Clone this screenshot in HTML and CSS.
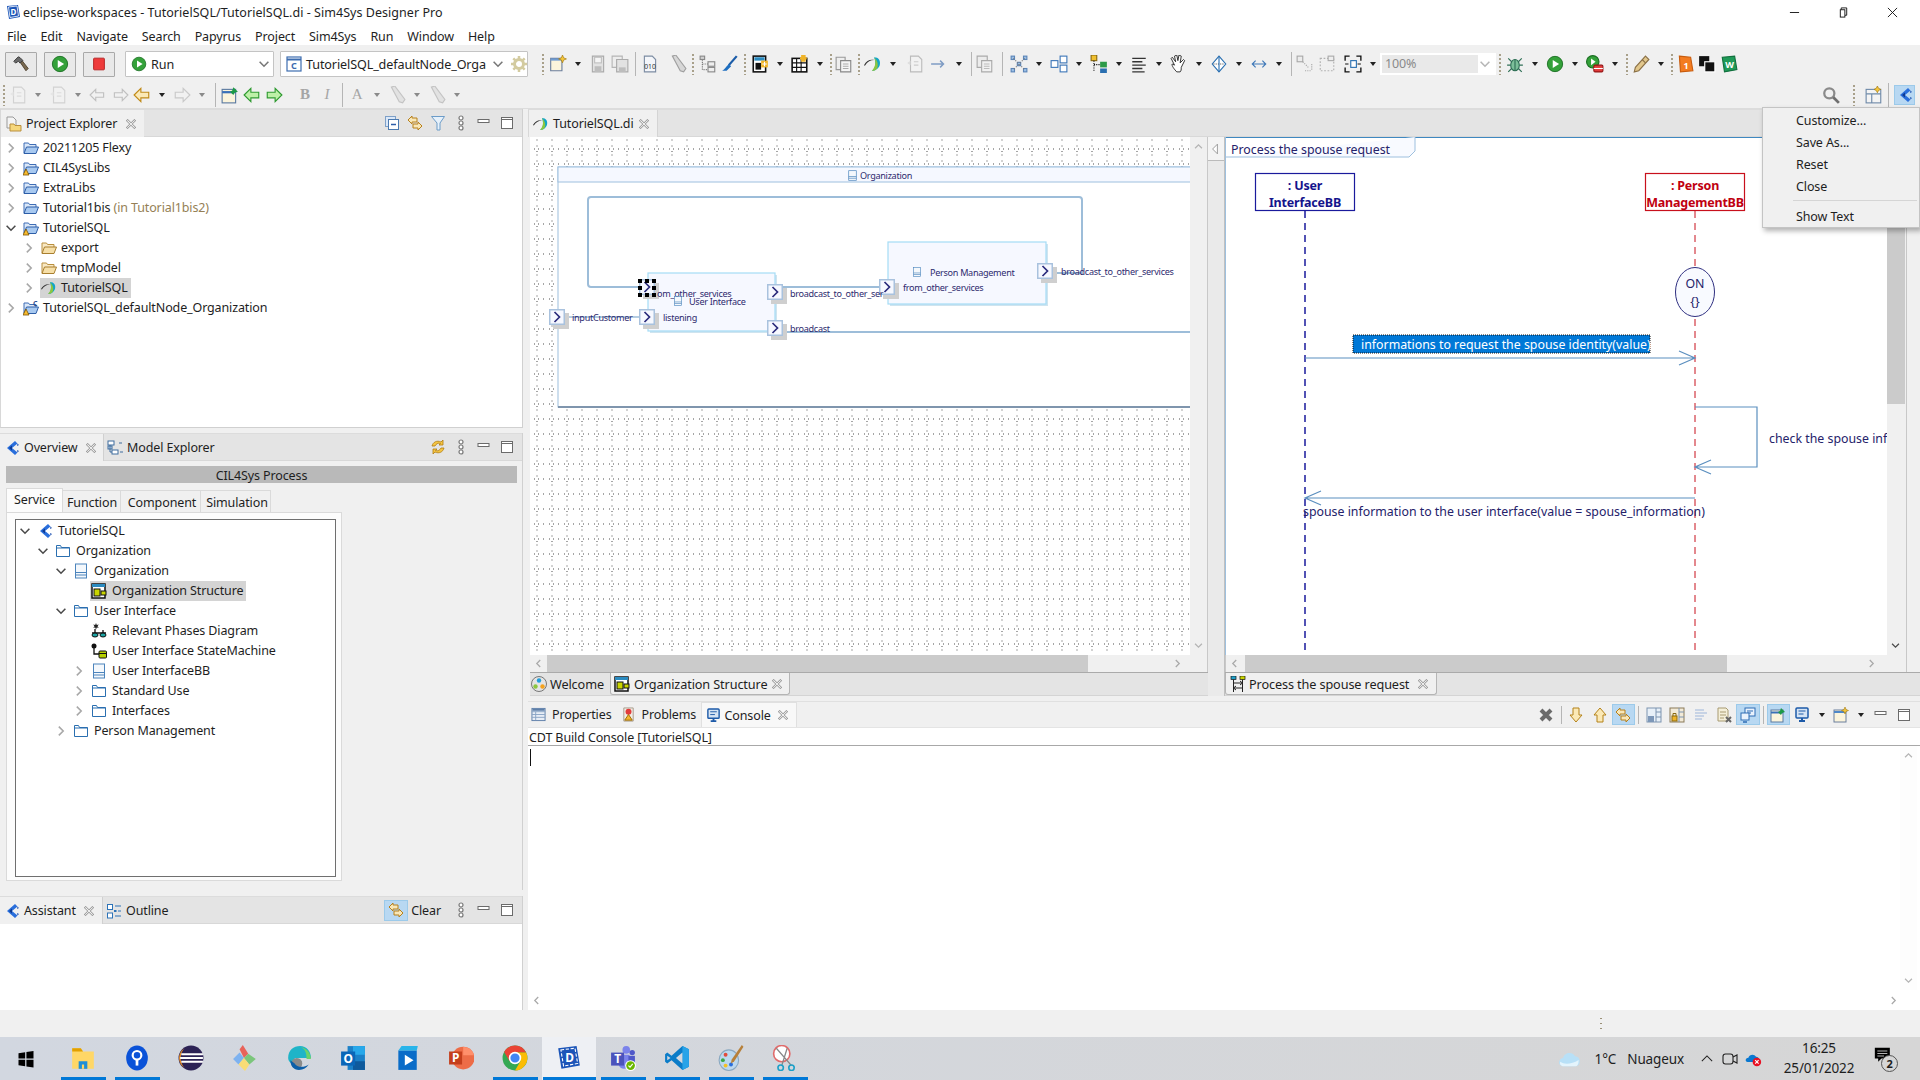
FILE: index.html
```html
<!DOCTYPE html>
<html lang="en">
<head>
<meta charset="utf-8">
<title>eclipse-workspaces - TutorielSQL/TutorielSQL.di - Sim4Sys Designer Pro</title>
<link rel="stylesheet" href="styles.css">
</head>
<body>
<svg class="sprite" xmlns="http://www.w3.org/2000/svg">
<defs>
<pattern id="grid" x="0" y="2" width="15" height="15" patternUnits="userSpaceOnUse">
<path d="M11 3h2M11 9h2M11 14.5h2M3.500 11v2M9.500 11v2M13.500 11v2" stroke="#a6a6a6" stroke-width="1" fill="none"/>
</pattern>
</defs>
<symbol id="chr" viewBox="0 0 16 16"><path d="M5.500 3l5 5-5 5" fill="none" stroke="#a8a8a8" stroke-width="1.800"/></symbol>
<symbol id="chd" viewBox="0 0 16 16"><path d="M3 5.500l5 5 5-5" fill="none" stroke="#4a4a4a" stroke-width="1.800"/></symbol>
<symbol id="chu" viewBox="0 0 16 16"><path d="M3 10.500l5-5 5 5" fill="none" stroke="#b4b4b4" stroke-width="1.800"/></symbol>
<symbol id="chg" viewBox="0 0 16 16"><path d="M3 5.500l5 5 5-5" fill="none" stroke="#b4b4b4" stroke-width="1.800"/></symbol>
<symbol id="x" viewBox="0 0 16 16"><path d="M3.500 3.500l9 9M12.500 3.500l-9 9" stroke="#8c8c8c" stroke-width="3.200" stroke-linecap="square"/><path d="M3.500 3.500l9 9M12.500 3.500l-9 9" stroke="#f4f4f4" stroke-width="1.400" stroke-linecap="square"/></symbol>
<symbol id="min" viewBox="0 0 16 16"><rect x="2" y="4.500" width="11" height="3" fill="#fff" stroke="#6b6b6b"/></symbol>
<symbol id="max" viewBox="0 0 16 16"><rect x="2.500" y="2.500" width="11" height="11" fill="#fff" stroke="#6b6b6b"/><path d="M2.500 4.500h11" stroke="#6b6b6b"/></symbol>
<symbol id="dots" viewBox="0 0 16 16"><g fill="#fff" stroke="#7a7a7a" stroke-width="1.200"><circle cx="8" cy="3" r="2"/><circle cx="8" cy="8" r="2"/><circle cx="8" cy="13" r="2"/></g></symbol>
<symbol id="fb" viewBox="0 0 16 16"><path d="M1 13V3h4.500l1 1.500H13V7" fill="#dbe8f8" stroke="#3f6db5"/><path d="M1 13.500l2.500-6.500h12L13 13.500z" fill="#a8c9f0" stroke="#2d5ea8"/></symbol>
<symbol id="fo" viewBox="0 0 16 16"><path d="M1 13V3h4.500l1 1.500H13V7" fill="#f8e8c4" stroke="#b98f3e"/><path d="M1 13.500l2.500-6.500h12L13 13.500z" fill="#f6dfa8" stroke="#a97f2f"/></symbol>
<symbol id="pe" viewBox="0 0 16 16"><path d="M1 1h6l3 3v8H1z" fill="#f4f4f4" stroke="#9a9a9a"/><path d="M4 8h4l1 1.500h6V15H4z" fill="#f6d77c" stroke="#b98f3e"/></symbol>
<symbol id="fbw" viewBox="0 0 16 16"><use href="#fb" width="16" height="16"/><path d="M3 9l3 6H0z" fill="#f8bb2e" stroke="#7a5200" stroke-width=".8"/></symbol>
<symbol id="pap" viewBox="0 0 16 16"><path d="M0 9C2 5 6 3.500 9 4.500 6 4.500 3 6 .8 9.500z" fill="#333"/><path d="M9 2c4 0 6 3 5 7-1 3-4 5-7 5 3-2 4-6 2-12z" fill="#12a5c8"/><path d="M9 2c2 4 1 9-2 12 3 0 4-1 5-3 1-4-1-7-3-9z" fill="#8cc63f"/></symbol>
<symbol id="cil" viewBox="0 0 16 16"><path d="M11 1L3 8l8 7 2.500-2.500L8 8l5.500-4.500z" fill="#2a6fdc"/><path d="M13.500 3.500L15 5l-2 1zM13.500 12.500L15 11l-2-1z" fill="#1d50b0"/><path d="M5 8l3-2.500v5z" fill="#0e3b94"/></symbol>
<symbol id="mex" viewBox="0 0 16 16"><g fill="#fff" stroke="#3f6d9e"><rect x="1" y="1" width="6" height="4"/><rect x="5" y="10" width="6" height="4"/><rect x="1" y="6" width="4" height="3" fill="#cfe0f0"/></g><path d="M3 5v7h2M12 3h3M13 12h3" fill="none" stroke="#3f6d9e"/></symbol>
<symbol id="sync" viewBox="0 0 16 16"><path d="M13 1v5H9l1.500-1.500C8 3.500 6 5 5 7H2c1-4 5-6 9-4z" fill="#f5c542" stroke="#b07c10" stroke-width=".8"/><path d="M3 15v-5h4l-1.500 1.500c2.500 1 4.500-.5 5.500-2.500h3c-1 4-5 6-9 4z" fill="#f5c542" stroke="#b07c10" stroke-width=".8"/></symbol>
<symbol id="out" viewBox="0 0 16 16"><g fill="#fff" stroke="#2d73b8"><rect x="1.500" y="1.500" width="5" height="5"/><rect x="1.500" y="10" width="5" height="5"/></g><path d="M9 3h6M9 8h2M12 8h3M9 13h6" stroke="#2d73b8"/><rect x="8" y="7" width="2" height="2" fill="#2d73b8"/></symbol>
<symbol id="link" viewBox="0 0 16 16"><path d="M1 5l4-4v2h5v4H5v2z" fill="#f8e7b8" stroke="#b8801a"/><path d="M15 11l-4 4v-2H6V9h5V7z" fill="#f8e7b8" stroke="#b8801a"/></symbol>
<symbol id="coll" viewBox="0 0 16 16"><rect x="1.500" y="1.500" width="10" height="10" fill="#dbe8f8" stroke="#7ea0c8"/><rect x="4.500" y="4.500" width="10" height="10" fill="#fff" stroke="#4c7ab0"/><path d="M7 9.500h5" stroke="#2d5ea8" stroke-width="1.500"/></symbol>
<symbol id="filt" viewBox="0 0 16 16"><path d="M1.500 1.500h13L10 8v7H7V8z" fill="#e6f1fb" stroke="#6c9cc8"/></symbol>
<symbol id="fold" viewBox="0 0 16 16"><path d="M1.500 13.500v-11h4l1 2h8v9z" fill="#fff" stroke="#2a6fb0"/><path d="M1.500 5h13" stroke="#2a6fb0"/></symbol>
<symbol id="block" viewBox="0 0 16 16"><rect x="2.500" y="1" width="11" height="14" fill="#f4f8fc" stroke="#4c84bc"/><path d="M2.500 9.500h11M2.500 12h11" stroke="#4c84bc"/></symbol>
<symbol id="ostr" viewBox="0 0 16 16"><rect x="1" y="1" width="13" height="14" fill="#fff" stroke="#111" stroke-width="1.500"/><rect x="1" y="1" width="13" height="3" fill="#2b8bc0"/><rect x="3" y="6" width="6" height="7" fill="#c9d400" stroke="#111"/><rect x="10" y="8" width="5" height="4" fill="#c9d400" stroke="#111"/></symbol>
<symbol id="phas" viewBox="0 0 16 16"><path d="M5 0l.8 2 2-.4-1.300 1.600 1.300 1.500-2-.3L5 6.500 4.200 4.400l-2 .3 1.300-1.500L2.200 1.600l2 .4z" fill="#222"/><path d="M4 6v5M1 10h14M12 7v4" stroke="#111" stroke-width="1.300"/><ellipse cx="4" cy="12" rx="3" ry="2" fill="#1ca4a4" stroke="#111"/><ellipse cx="12" cy="12" rx="3" ry="2" fill="#1ca4a4" stroke="#111"/></symbol>
<symbol id="stm" viewBox="0 0 16 16"><circle cx="3" cy="3" r="2.500" fill="#111"/><path d="M3 5v6h5" fill="none" stroke="#111" stroke-width="1.300"/><rect x="8" y="8" width="7.500" height="7" rx="1" fill="#b7d000" stroke="#111"/><path d="M8 10.500h7.500" stroke="#111"/></symbol>
<symbol id="tb-props" viewBox="0 0 16 16"><rect x="1" y="1.500" width="14" height="13" fill="#e8eef6" stroke="#5d7ea8"/><path d="M1 5h14M1 8h14M1 11h14M5 5v9" stroke="#8aa4c4"/><path d="M1.500 3h13" stroke="#5d7ea8" stroke-width="2"/></symbol>
<symbol id="tb-prob" viewBox="0 0 16 16"><path d="M3 1h10v14H3z" fill="#f2ece4" stroke="#a59a8a"/><circle cx="8" cy="5" r="3.200" fill="#e23b3b"/><path d="M8 8l4 6H4z" fill="#f6b52e" stroke="#9a6a00"/></symbol>
<symbol id="tb-cons" viewBox="0 0 16 16"><rect x="2" y="1" width="12" height="10" rx="1" fill="#d6e4f4" stroke="#1d5aa8" stroke-width="1.500"/><path d="M4.500 4h7M4.500 7h5" stroke="#1d5aa8"/><path d="M5 14h6M8 11v3" stroke="#1d5aa8" stroke-width="2"/></symbol>
<symbol id="wel" viewBox="0 0 16 16"><circle cx="8" cy="8" r="7.500" fill="#e4e4e4" stroke="#777"/><circle cx="8" cy="4.500" r="2.200" fill="#1f9fdc"/><circle cx="4.500" cy="10.500" r="2.200" fill="#8cc63f"/><circle cx="11.500" cy="10.500" r="2.200" fill="#f3a21f"/></symbol>
<symbol id="seq" viewBox="0 0 16 16"><rect x="1" y="0" width="5" height="3.500" fill="#1f9fc8" stroke="#111" stroke-width=".7"/><rect x="10" y="0" width="5" height="3.500" fill="#c9d400" stroke="#111" stroke-width=".7"/><path d="M3.500 3.500V16M12.500 3.500V16M3.500 7h9M12.500 12h-9M10 5l2.500 2-2.500 2M6 10l-2.500 2L6 14" fill="none" stroke="#222"/></symbol>
<symbol id="hammer" viewBox="0 0 20 20"><path d="M9 8l2-2 7 9-2.500 2.500z" fill="#7a6a50" stroke="#4a3d2a"/><path d="M2 7l5-5 2 1 3 3-3 3-2-2-3 2z" fill="#6a6a6a" stroke="#333"/></symbol>
<symbol id="playb" viewBox="0 0 20 20"><circle cx="10" cy="10" r="8.500" fill="#34a13a" stroke="#1b6e22"/><path d="M7.500 5.500l7 4.500-7 4.500z" fill="#fff"/></symbol>
<symbol id="stop" viewBox="0 0 20 20"><rect x="4" y="3.500" width="12" height="13" rx="1" fill="#ee3b3b" stroke="#b21d1d"/></symbol>
<symbol id="cdoc" viewBox="0 0 16 16"><rect x="1" y="1" width="14" height="14" fill="#fff" stroke="#3d6db0" stroke-width="1.200"/><path d="M1 3.500h14" stroke="#3d6db0" stroke-width="2"/></symbol>
<symbol id="gear" viewBox="0 0 16 16"><circle cx="8" cy="8" r="4.500" fill="none" stroke="#d3cba0" stroke-width="3"/><path d="M8 0v3M8 13v3M0 8h3M13 8h3M2.300 2.300l2 2M11.700 11.700l2 2M13.700 2.300l-2 2M4.300 11.700l-2 2" stroke="#d3cba0" stroke-width="2.500"/></symbol>
<symbol id="new" viewBox="0 0 16 16"><path d="M1.500 3h10v11h-10z" fill="#fbf4dc" stroke="#6a7e9c"/><path d="M1.500 3h10v2h-10z" fill="#6f9bd0"/><path d="M12 0l1 2.500 2.500 1L13 4.500 12 7l-1-2.500L8.500 3.500l2.500-1z" fill="#f6c63a" stroke="#a37a10" stroke-width=".6"/></symbol>
<symbol id="save" viewBox="0 0 16 16"><path d="M3 1h10v14H3z" fill="#e2e2e2" stroke="#ababab"/><rect x="5" y="2" width="6" height="5" fill="#f5f5f5" stroke="#c0c0c0"/><rect x="5" y="10" width="6" height="5" fill="#bdbdbd"/></symbol>
<symbol id="saveall" viewBox="0 0 16 16"><path d="M1 1h9v10H1z" fill="#ededed" stroke="#b5b5b5"/><path d="M5 4h10v11H5z" fill="#e2e2e2" stroke="#ababab"/><rect x="7" y="11" width="6" height="4" fill="#bdbdbd"/></symbol>
<symbol id="bin" viewBox="0 0 16 16"><path d="M3 1h7l3 3v11H3z" fill="#f4f6fa" stroke="#7c8ca2"/></symbol>
<symbol id="pen" viewBox="0 0 16 16"><path d="M3 1l3-1 9 12-2 3-3-1z" fill="#d7d7d7" stroke="#9f9f9f"/></symbol>
<symbol id="tree" viewBox="0 0 16 16"><path d="M3 2v11h5M3 8h5" fill="none" stroke="#777" stroke-dasharray="1 1"/><rect x="1" y="1" width="4" height="3" fill="#d0d0d0" stroke="#888"/><rect x="8" y="6" width="6" height="4" fill="#eee" stroke="#888"/><rect x="8" y="11" width="6" height="4" fill="#eee" stroke="#888"/></symbol>
<symbol id="brush" viewBox="0 0 16 16"><path d="M14 1L7 9" stroke="#1b5ca8" stroke-width="2"/><path d="M7 8l2 2-4 4H1c2-1 3-3 6-6z" fill="#1f6fc0"/></symbol>
<symbol id="doc-y" viewBox="0 0 16 16"><rect x="2" y="1" width="11" height="14" fill="#fff" stroke="#111" stroke-width="1.400"/><rect x="3" y="2" width="9" height="3" fill="#2b8bc0"/><rect x="4" y="7" width="5" height="6" fill="#111"/><rect x="9" y="5" width="6" height="6" fill="#f0b429"/><path d="M10 8h4M12 6v4" stroke="#fff"/></symbol>
<symbol id="tab-y" viewBox="0 0 16 16"><rect x="1" y="3" width="13" height="12" fill="#fff" stroke="#111" stroke-width="1.400"/><path d="M1 7h13M1 11h13M5 3v12M9 3v12" stroke="#111"/><path d="M9 0h4v6H9z" fill="#f0b429"/><path d="M8 3h6" stroke="#f0b429" stroke-width="2"/></symbol>
<symbol id="clip" viewBox="0 0 16 16"><path d="M1 2h8v11H1z" fill="#eee" stroke="#999"/><path d="M5 5h9v10H5z" fill="#f4f4f4" stroke="#888"/><path d="M7 8h5M7 10h5M7 12h5" stroke="#aaa"/></symbol>
<symbol id="rec" viewBox="0 0 16 16"><path d="M4 1h7l3 3v11H4z" fill="#f2f2f2" stroke="#bbb"/><path d="M7 6h4M7 9h4" stroke="#ccc"/><path d="M1 7l3-2v4z" fill="#ddd"/></symbol>
<symbol id="arrR" viewBox="0 0 16 16"><path d="M1 8h11M9 5l3 3-3 3" fill="none" stroke="#7f9cc4" stroke-width="1.300"/></symbol>
<symbol id="pages" viewBox="0 0 16 16"><path d="M1 1h9v10H1z" fill="#ececec" stroke="#aaa"/><path d="M5 5h9v10H5z" fill="#f1f1f1" stroke="#aaa"/><path d="M7 8h5M7 10h5M7 12h5" stroke="#bbb"/></symbol>
<symbol id="net" viewBox="0 0 16 16"><g fill="#9cc0e6" stroke="#5b85b8"><rect x="1" y="1" width="3" height="3"/><rect x="12" y="1" width="3" height="3"/><rect x="6.500" y="6.500" width="3" height="3"/><rect x="1" y="12" width="3" height="3"/><rect x="12" y="12" width="3" height="3"/></g><path d="M3 3l10 10M13 3L3 13" stroke="#777" stroke-dasharray="1 1.500"/></symbol>
<symbol id="boxes" viewBox="0 0 16 16"><rect x="9" y="1" width="6" height="6" fill="#fff" stroke="#3f78b8"/><rect x="1" y="5" width="6" height="6" fill="#fff" stroke="#3f78b8"/><rect x="9" y="9" width="6" height="6" fill="#fff" stroke="#3f78b8"/></symbol>
<symbol id="align" viewBox="0 0 16 16"><rect x="1" y="0" width="5" height="5" fill="#f0c030" stroke="#8a6a10"/><rect x="9" y="6" width="6" height="5" fill="#2c9a48"/><rect x="9" y="12" width="6" height="4" fill="#2a6fb0"/><path d="M3.500 5v10M3.500 8.500h5" stroke="#111" stroke-dasharray="1 1"/></symbol>
<symbol id="lines" viewBox="0 0 16 16"><path d="M2 3h12M2 6h9M2 9h12M2 12h9M2 15h11" stroke="#333" stroke-width="1.200"/></symbol>
<symbol id="hand" viewBox="0 0 16 16"><path d="M6 15c-2-2-5-6-4-7l2 1-3-6 1-1 3 4-1-5 2-1 1 5 1-5 2 1-1 6 3-3 1 1-3 6c0 2 0 3-1 4z" fill="#fff" stroke="#222" stroke-width=".8"/></symbol>
<symbol id="rhomb" viewBox="0 0 16 16"><path d="M8 1l6 7-6 7-6-7z" fill="#fff" stroke="#2a6fb0"/><path d="M3 8h10" stroke="#555" stroke-dasharray="1 1"/><path d="M8 1v14" stroke="#2a6fb0"/></symbol>
<symbol id="dbl" viewBox="0 0 16 16"><path d="M2 8h12M5 5L2 8l3 3M11 5l3 3-3 3" fill="none" stroke="#3f78b8"/></symbol>
<symbol id="grpa" viewBox="0 0 16 16"><rect x="1" y="1" width="5" height="5" fill="#ececec" stroke="#a8a8a8"/><path d="M6 6l5 5M8 14h6M14 8v6" stroke="#a8a8a8" stroke-dasharray="1 1"/></symbol>
<symbol id="grpb" viewBox="0 0 16 16"><rect x="2" y="3" width="12" height="11" fill="none" stroke="#b0b0b0" stroke-dasharray="1.500 1.500"/><rect x="9" y="1" width="5" height="4" fill="#eee" stroke="#aaa"/></symbol>
<symbol id="zoomfit" viewBox="0 0 16 16"><path d="M5 1H1v4M11 1h4v4M5 15H1v-4M11 15h4v-4" fill="none" stroke="#111" stroke-width="1.200"/><rect x="6" y="5" width="5" height="6" fill="#fff" stroke="#2a6fb0"/><path d="M1 8h3M15 8h-3" stroke="#111"/></symbol>
<symbol id="bug" viewBox="0 0 16 16"><ellipse cx="8" cy="9" rx="3.800" ry="5" fill="#7cc09a" stroke="#2e6f55"/><path d="M8 4v10M2 3l3 3M14 3l-3 3M1 9h3M12 9h3M2 15l3-3M14 15l-3-3" stroke="#2e6f55"/></symbol>
<symbol id="runext" viewBox="0 0 16 16"><circle cx="6" cy="6" r="5.500" fill="#34a13a" stroke="#1b6e22"/><path d="M4.500 3l4 3-4 3z" fill="#fff"/><rect x="7" y="9" width="8" height="6" rx="1" fill="#e23b3b" stroke="#961616"/><path d="M7 12h8" stroke="#fff"/></symbol>
<symbol id="pencil2" viewBox="0 0 16 16"><path d="M12 1l3 3-9 10-4 1 1-4z" fill="#e2c78c" stroke="#8a7046"/><path d="M9 4l3 3" stroke="#8a7046"/></symbol>
<symbol id="oj" viewBox="0 0 16 16"><path d="M3 1l10 1 2 12-11 1z" fill="#f37c21" stroke="#c85c0e"/></symbol>
<symbol id="blk" viewBox="0 0 16 16"><rect x="1" y="1" width="9" height="9" fill="#111"/><rect x="6" y="6" width="9" height="9" fill="#111" stroke="#fff"/></symbol>
<symbol id="wrd" viewBox="0 0 16 16"><path d="M2 2l11-1 2 12-11 2z" fill="#1f9a58" stroke="#12703e"/></symbol>
<symbol id="srch" viewBox="0 0 16 16"><circle cx="6.500" cy="6.500" r="4.500" fill="none" stroke="#8a8a8a" stroke-width="2"/><path d="M10 10l5 5" stroke="#6f6f6f" stroke-width="2.500"/></symbol>
<symbol id="persp" viewBox="0 0 16 16"><rect x="1" y="3" width="13" height="12" fill="#f4f4f4" stroke="#6f8aa8"/><path d="M1 7h13M6 7v8" stroke="#6f8aa8"/><path d="M11 0l1 2 2 1-2 1-1 2-1-2-2-1 2-1z" fill="#f6c63a" stroke="#a37a10" stroke-width=".6"/></symbol>
<symbol id="clear" viewBox="0 0 16 16"><path d="M3 3l10 10M13 3L3 13" stroke="#6b6b6b" stroke-width="4"/></symbol>
<symbol id="dn" viewBox="0 0 16 16"><path d="M5 1h6v7h3l-6 7-6-7h3z" fill="#fbe9b6" stroke="#b48218"/></symbol>
<symbol id="up" viewBox="0 0 16 16"><path d="M5 15h6V8h3L8 1 2 8h3z" fill="#fbe9b6" stroke="#b48218"/></symbol>
<symbol id="csave" viewBox="0 0 16 16"><rect x="1" y="1" width="14" height="14" fill="#e8f0f8" stroke="#7c94b0"/><path d="M10 1v14M10 5h5M10 10h5" stroke="#7c94b0"/><rect x="2" y="9" width="6" height="6" fill="#7d97b8"/></symbol>
<symbol id="clock" viewBox="0 0 16 16"><rect x="1" y="1" width="14" height="14" fill="#f2ead8" stroke="#8a7a58"/><path d="M10 1v14M10 5h5M10 10h5" stroke="#7c94b0"/><rect x="3" y="9" width="5" height="5" fill="#f0b429" stroke="#8a6a10"/><path d="M4 9V6.500h3V9" fill="none" stroke="#8a6a10"/></symbol>
<symbol id="word" viewBox="0 0 16 16"><path d="M2 3h9M2 6h12M2 9h9M2 12h7" stroke="#9db6da" stroke-width="1.200"/></symbol>
<symbol id="cdel" viewBox="0 0 16 16"><path d="M2 1h8l2 2v11H2z" fill="#f4efd9" stroke="#a89b72"/><path d="M4 5h6M4 8h6M4 11h4" stroke="#a89b72"/><path d="M10 10l5 5M15 10l-5 5" stroke="#666" stroke-width="2"/></symbol>
<symbol id="cshow" viewBox="0 0 16 16"><rect x="5" y="1" width="10" height="8" fill="#eaf2fc" stroke="#2e6cb4"/><path d="M7 4h6M7 6h4" stroke="#2e6cb4"/><rect x="1" y="6" width="8" height="7" fill="#eaf2fc" stroke="#2e6cb4"/><path d="M3 15h4" stroke="#2e6cb4" stroke-width="1.500"/></symbol>
<symbol id="cpin" viewBox="0 0 16 16"><rect x="1" y="3" width="12" height="12" fill="#fbf4dc" stroke="#5b7aa0"/><path d="M1 5.500h12" stroke="#3a70b8" stroke-width="2"/><path d="M11 1l4 4-3 1-1 2-3-3 2-1z" fill="#1d9a45"/></symbol>
<symbol id="wnew" viewBox="0 0 16 16"><rect x="1" y="3" width="12" height="12" fill="#fbf4dc" stroke="#6a7e9c"/><path d="M1 5h12" stroke="#4f88c8" stroke-width="2"/><path d="M12 0l1 2.500 2.500 1-2.500 1L12 7l-1-2.500-2.500-1 2.500-1z" fill="#f6c63a" stroke="#a37a10" stroke-width=".6"/></symbol>
<symbol id="d-logo" viewBox="0 0 16 16"><path d="M2 2l11-1 2 12-11 2z" fill="#1c55b8"/><path d="M3.500 3l8.500-1 1.500 10L5 13.500z" fill="none" stroke="#fff" stroke-width=".8"/></symbol>
<symbol id="port" viewBox="0 0 20 20"><rect x="4" y="4" width="16" height="16" fill="#cfcfcf"/><rect x=".75" y=".75" width="14.500" height="14.500" fill="#f6f8ff" stroke="#a9c2de" stroke-width="1.500"/><path d="M5.500 3l5 5-5 5" fill="none" stroke="#2a2a7c" stroke-width="1.700"/></symbol>
<symbol id="t-win" viewBox="0 0 24 24"><path d="M3 5l8-1.200V11.500H3zM12.500 3.500L21 2.300V11.500h-8.500zM3 13h8v7.800L3 19.600zM12.500 13H21v9.300l-8.500-1.300z" fill="#000"/></symbol>
<symbol id="t-files" viewBox="0 0 24 24"><path d="M2 3h8l2 3h10v16H2z" fill="#ffd767"/><path d="M2 3h8l2 3H2z" fill="#e2a000"/><path d="M8 15h8v7H8z" fill="#1f8fd8"/><path d="M11 18h2v4h-2z" fill="#ffd767"/></symbol>
<symbol id="t-key" viewBox="0 0 24 24"><ellipse cx="12" cy="12" rx="10" ry="11.500" fill="#0a52d8"/><circle cx="12" cy="9.500" r="4" fill="none" stroke="#fff" stroke-width="2"/><path d="M12 13.500V19" stroke="#fff" stroke-width="2.500"/></symbol>
<symbol id="t-ecl" viewBox="0 0 24 24"><circle cx="12" cy="12" r="11.500" fill="#2c2255"/><path d="M1 12A11 11 0 0 1 6 3 13 13 0 0 0 6 21 11 11 0 0 1 1 12z" fill="#f7941e"/><path d="M3 8.500h20M2 12h21M3 15.500h20" stroke="#fff" stroke-width="1.800"/></symbol>
<symbol id="t-gem" viewBox="0 0 24 24"><path d="M10 0l5 8-4 4-4-8z" fill="#e8635a"/><path d="M15 8l7 5-6 5-5-6z" fill="#7bc67b"/><path d="M7 7l4 5-5 6-5-5z" fill="#7db2f0"/><path d="M6 18l5-6 5 6-4 6z" fill="#f8dc75"/></symbol>
<symbol id="t-edge" viewBox="0 0 24 24"><path d="M2 12C2 5 7 1 13 1c6 0 10 5 10 11H8c0 2 3 4 7 3-6 6-13 2-13-3z" fill="#1fb4c8"/><path d="M23 13c0-6-4-10-9-11 4 2 5 6 5 11z" fill="#6bd36a"/><circle cx="10" cy="17" r="5" fill="#8a8a8a"/><path d="M4 14c0 5 3 9 8 9 4 0 7-2 9-5-4 3-11 3-13-1z" fill="#0c5ea8"/></symbol>
<symbol id="t-out" viewBox="0 0 24 24"><rect x="7" y="1" width="16" height="22" fill="#1b80c8"/><rect x="12" y="1" width="11" height="8" fill="#28a8ea"/><rect x="12" y="15" width="11" height="8" fill="#0f5a9c"/><rect x="1" y="6" width="13" height="13" fill="#0a66b8"/></symbol>
<symbol id="t-play" viewBox="0 0 24 24"><path d="M4 5h17v18H4z" fill="#0a6cc8"/><path d="M7 1h15l-1 4H4z" fill="#28b4ea"/><path d="M10 9l8 5-8 5z" fill="#fff"/></symbol>
<symbol id="t-ppt" viewBox="0 0 24 24"><circle cx="14" cy="12" r="10.500" fill="#ed6c47"/><path d="M14 1.500a10.500 10.500 0 0 1 10 8H14z" fill="#ff8f6b"/><rect x="1" y="6" width="12" height="12" fill="#c43e1c"/></symbol>
<symbol id="t-chr" viewBox="0 0 24 24"><circle cx="12" cy="12" r="11.500" fill="#34a853"/><path d="M12 .5A11.500 11.500 0 0 1 22.300 7H12z" fill="#ea4335"/><path d="M12 .5A11.500 11.500 0 0 0 2 6.500L7 15l5-8z" fill="#ea4335"/><path d="M22.300 7A11.500 11.500 0 0 1 12 23.500L17 15l-5-8z" fill="#fbbc05"/><circle cx="12" cy="12" r="5" fill="#4285f4" stroke="#fff" stroke-width="1.500"/></symbol>
<symbol id="t-des" viewBox="0 0 24 24"><path d="M2 3l17-2 3 18-17 3z" fill="#1c55b8"/><path d="M4.500 4.500l13-1.500 2.500 14L7 19.500z" fill="none" stroke="#fff" stroke-dasharray="3 1.500"/></symbol>
<symbol id="t-teams" viewBox="0 0 24 24"><circle cx="15" cy="4.500" r="3.500" fill="#7b83eb"/><circle cx="20.500" cy="7" r="2.500" fill="#5059c9"/><path d="M8 9h10v8a5 5 0 0 1-10 0z" fill="#7b83eb"/><rect x="17" y="10" width="6" height="8" fill="#5059c9"/><rect x="1" y="7" width="12" height="12" fill="#4b53bc"/><circle cx="19" cy="19" r="5" fill="#fff"/><circle cx="19" cy="19" r="4" fill="#6bb700"/><path d="M17 19l1.500 1.500L21 17.500" fill="none" stroke="#fff"/></symbol>
<symbol id="t-vs" viewBox="0 0 24 24"><path d="M17 1l6 3v16l-6 3L7 14l-4 3-2-1.500V8.500L3 7l4 3z" fill="#0b7cc8"/><path d="M17 1l6 3v16l-6 3z" fill="#28a3e8"/><path d="M17 7l-6 5 6 5z" fill="#d3d8e0"/><path d="M3 10l3 2-3 2z" fill="#d3d8e0"/></symbol>
<symbol id="t-pal" viewBox="0 0 24 24"><ellipse cx="10" cy="14" rx="9" ry="9.500" fill="#bcd8ee" stroke="#8aa8c0"/><circle cx="7" cy="9" r="1.800" fill="#e24b3b"/><circle cx="4.500" cy="14" r="1.800" fill="#3ba84b"/><circle cx="7" cy="19" r="1.800" fill="#f4c022"/><circle cx="12" cy="18" r="1.800" fill="#2a6fdc"/><path d="M22 0l1.500 1.500L15 15l-3 2 .5-3.500z" fill="#b7803a"/></symbol>
<symbol id="t-snip" viewBox="0 0 24 24"><circle cx="9" cy="8" r="7.500" fill="#fff" stroke="#e06b6b" stroke-width="1.500"/><path d="M4 3l14 16M14 3L9 19" stroke="#888" stroke-width="1.200"/><circle cx="8" cy="21" r="2.500" fill="none" stroke="#1ca0c8" stroke-width="1.500"/><circle cx="18" cy="21" r="2.500" fill="none" stroke="#1ca0c8" stroke-width="1.500"/></symbol>
<symbol id="t-cloud" viewBox="0 0 24 24"><path d="M6 20c-7 0-7-8-1-9 1-6 10-8 13-2 7 0 7 11 0 11z" fill="#b8e0f7"/><path d="M6 20c-4 0-5-3-4-5 4 3 12 3 20-2 0 4-1 7-4 7z" fill="#e4f4fc"/></symbol>
<symbol id="t-meet" viewBox="0 0 16 16"><rect x="1" y="3" width="10" height="10" rx="2.500" fill="none" stroke="#222" stroke-width="1.100"/><path d="M11 6l4-2v8l-4-2" fill="none" stroke="#222" stroke-width="1.100"/></symbol>
<symbol id="t-drive" viewBox="0 0 20 20"><path d="M3 14c-3 0-3-5 1-5 1-4 7-5 9-1 4 0 5 6 1 6z" fill="#0a78d0"/><circle cx="14" cy="14" r="5" fill="#e81123"/><path d="M12 12l4 4M16 12l-4 4" stroke="#fff" stroke-width="1.400"/></symbol>
<symbol id="t-note" viewBox="0 0 24 24"><path d="M1 2h18v13H9l-4 4v-4H1z" fill="#000"/><path d="M4 6h12M4 9h12M4 12h8" stroke="#d6d6d6"/></symbol>
</svg>

<div class="app">
<header class="titlebar">
  <svg class="ic ic-title" viewBox="0 0 16 16"><use href="#d-logo" width="16" height="16"/><text x="8.500" y="11" class="ovw">D</text></svg>
  <span class="title">eclipse-workspaces - TutorielSQL/TutorielSQL.di - Sim4Sys Designer Pro</span>
  <div class="winctl">
    <span class="wc"><svg viewBox="0 0 12 12"><path d="M1 6h10" stroke="#111"/></svg></span>
    <span class="wc"><svg viewBox="0 0 12 12"><path d="M3.500 3V1h6v8h-2" fill="none" stroke="#111"/><rect x="2.500" y="3" width="5" height="8" fill="#fff" stroke="#111"/></svg></span>
    <span class="wc"><svg viewBox="0 0 12 12"><path d="M1 1l10 10M11 1L1 11" stroke="#111"/></svg></span>
  </div>
</header>
<nav class="menubar">
  <span>File</span><span>Edit</span><span>Navigate</span><span>Search</span><span>Papyrus</span><span>Project</span><span>Sim4Sys</span><span>Run</span><span>Window</span><span>Help</span>
</nav>

<div class="toolbars">
  <div class="tbrow">
    <span class="bigbtn"><svg><use href="#hammer"/></svg></span>
    <span class="bigbtn"><svg><use href="#playb"/></svg></span>
    <span class="bigbtn"><svg><use href="#stop"/></svg></span>
    <span class="combo combo-run"><svg class="ic18"><use href="#playb"/></svg><span class="ctext">Run</span><svg class="cchev"><use href="#chd"/></svg></span>
    <span class="combo combo-cfg"><svg class="ic18" viewBox="0 0 16 16"><use href="#cdoc" width="16" height="16"/><text x="8" y="12.500" class="ovlc">C</text></svg><span class="ctext">TutorielSQL_defaultNode_Orga</span><svg class="cchev"><use href="#chd"/></svg><svg class="ic18"><use href="#gear"/></svg></span>
    <span class="g g11"></span>
    <span class="i"><svg><use href="#new"/></svg></span><span class="a"></span>
    <span class="i"><svg><use href="#save"/></svg></span>
    <span class="i"><svg><use href="#saveall"/></svg></span>
    <span class="s"></span>
    <span class="i"><svg viewBox="0 0 16 16"><use href="#bin" width="16" height="16"/><text x="8" y="12.500" class="bin">010</text></svg></span>
    <span class="sp6"></span>
    <span class="i"><svg><use href="#pen"/></svg></span>
    <span class="g"></span>
    <span class="i"><svg><use href="#tree"/></svg></span>
    <span class="i"><svg><use href="#brush"/></svg></span>
    <span class="g"></span>
    <span class="i"><svg><use href="#doc-y"/></svg></span><span class="a"></span>
    <span class="i"><svg><use href="#tab-y"/></svg></span><span class="a"></span>
    <span class="g g4"></span>
    <span class="i"><svg><use href="#clip"/></svg></span>
    <span class="g g7"></span>
    <span class="i"><svg><use href="#pap"/></svg></span><span class="a"></span>
    <span class="sp2"></span>
    <span class="i"><svg><use href="#rec"/></svg></span>
    <span class="sp2"></span>
    <span class="i"><svg><use href="#arrR"/></svg></span><span class="a"></span>
    <span class="s s6"></span>
    <span class="i"><svg><use href="#pages"/></svg></span>
    <span class="s s12"></span>
    <span class="i"><svg><use href="#net"/></svg></span><span class="a"></span>
    <span class="i"><svg><use href="#boxes"/></svg></span><span class="a"></span>
    <span class="i"><svg><use href="#align"/></svg></span><span class="a"></span>
    <span class="i"><svg><use href="#lines"/></svg></span><span class="a"></span>
    <span class="i"><svg><use href="#hand"/></svg></span><span class="a"></span>
    <span class="i"><svg><use href="#rhomb"/></svg></span><span class="a"></span>
    <span class="i"><svg><use href="#dbl"/></svg></span><span class="a"></span>
    <span class="s s6"></span>
    <span class="i"><svg><use href="#grpa"/></svg></span>
    <span class="i"><svg><use href="#grpb"/></svg></span>
    <span class="sp4"></span>
    <span class="i"><svg><use href="#zoomfit"/></svg></span><span class="a"></span>
    <span class="zoombox"><span class="zoomval">100%</span><svg class="cchev dim"><use href="#chd"/></svg></span>
    <span class="g g8"></span>
    <span class="i"><svg><use href="#bug"/></svg></span><span class="a"></span>
    <span class="i"><svg><use href="#playb"/></svg></span><span class="a"></span>
    <span class="i"><svg><use href="#runext"/></svg></span><span class="a"></span>
    <span class="g g6"></span>
    <span class="i"><svg><use href="#pencil2"/></svg></span><span class="a"></span>
    <span class="g g4"></span>
    <span class="i"><svg viewBox="0 0 16 16"><use href="#oj" width="16" height="16"/><text x="9" y="12" class="ovw">1</text></svg></span>
    <span class="i"><svg><use href="#blk"/></svg></span>
    <span class="i"><svg viewBox="0 0 16 16"><use href="#wrd" width="16" height="16"/><text x="8.500" y="11.500" class="ovw">W</text></svg></span>
  </div>
  <div class="tbrow row2">
    <span class="g g6"></span>
    <span class="i dim"><svg><use href="#rec"/></svg></span><span class="a dim"></span>
    <span class="i dim"><svg><use href="#rec"/></svg></span><span class="a dim"></span>
    <span class="i dim"><svg viewBox="0 0 16 16"><path d="M1 8l5-5v3h7v4H6v3z" fill="#f2f2f2" stroke="#999"/></svg></span>
    <span class="i dim"><svg viewBox="0 0 16 16"><path d="M15 8l-5-5v3H3v4h7v3z" fill="#f2f2f2" stroke="#999"/></svg></span>
    <span class="i"><svg viewBox="0 0 16 16"><path d="M1 8l6-6v3.500h7v5H7V14z" fill="#fbe9b6" stroke="#c08a18"/></svg></span><span class="a"></span>
    <span class="i dim"><svg viewBox="0 0 16 16"><path d="M15 8L9 2v3.500H2v5h7V14z" fill="#f2f2f2" stroke="#aaa"/></svg></span><span class="a dim"></span>
    <span class="s"></span>
    <span class="i"><svg><use href="#cpin"/></svg></span>
    <span class="i"><svg viewBox="0 0 16 16"><path d="M1 8l6-6v3.500h7v5H7V14z" fill="#bdf0a8" stroke="#2e9a30"/></svg></span>
    <span class="i"><svg viewBox="0 0 16 16"><path d="M15 8L9 2v3.500H2v5h7V14z" fill="#bdf0a8" stroke="#2e9a30"/></svg></span>
    <span class="sp9"></span>
    <span class="i tbt bold">B</span>
    <span class="i tbt ital">I</span>
    <span class="s"></span>
    <span class="i tbt">A</span><span class="a dim"></span>
    <span class="i dim"><svg><use href="#pen"/></svg></span><span class="a dim"></span>
    <span class="i dim"><svg><use href="#pen"/></svg></span><span class="a dim"></span>
    <span class="grow"></span>
    <span class="i"><svg><use href="#srch"/></svg></span>
    <span class="g g14"></span>
    <span class="i"><svg><use href="#persp"/></svg></span>
    <span class="s s6"></span>
    <span class="hl-btn"><svg><use href="#cil"/></svg></span>
  </div>
</div>

<main class="workbench">
  <aside class="leftcol">
    <section class="panel p-explorer">
      <div class="tabbar">
        <div class="tab on tab-pe"><svg class="ic"><use href="#pe"/></svg><span>Project Explorer</span><svg class="close"><use href="#x"/></svg></div>
        <div class="tools">
          <svg class="ic"><use href="#coll"/></svg><svg class="ic"><use href="#link"/></svg><svg class="ic"><use href="#filt"/></svg><svg class="ic"><use href="#dots"/></svg><svg class="ic"><use href="#min"/></svg><svg class="ic"><use href="#max"/></svg>
        </div>
      </div>
      <div class="tree tree-pe">
        <div class="row"><svg class="chev"><use href="#chr"/></svg><span class="item"><svg class="ic"><use href="#fb"/></svg><span>20211205 Flexy</span></span></div>
        <div class="row"><svg class="chev"><use href="#chr"/></svg><span class="item"><svg class="ic"><use href="#fbw"/></svg><span>CIL4SysLibs</span></span></div>
        <div class="row"><svg class="chev"><use href="#chr"/></svg><span class="item"><svg class="ic"><use href="#fb"/></svg><span>ExtraLibs</span></span></div>
        <div class="row"><svg class="chev"><use href="#chr"/></svg><span class="item"><svg class="ic"><use href="#fb"/></svg><span>Tutorial1bis <span class="deco">(in Tutorial1bis2)</span></span></span></div>
        <div class="row"><svg class="chev"><use href="#chd"/></svg><span class="item"><svg class="ic"><use href="#fbw"/></svg><span>TutorielSQL</span></span></div>
        <div class="row l1"><svg class="chev"><use href="#chr"/></svg><span class="item"><svg class="ic"><use href="#fo"/></svg><span>export</span></span></div>
        <div class="row l1"><svg class="chev"><use href="#chr"/></svg><span class="item"><svg class="ic"><use href="#fo"/></svg><span>tmpModel</span></span></div>
        <div class="row l1"><svg class="chev"><use href="#chr"/></svg><span class="item sel"><svg class="ic"><use href="#pap"/></svg><span>TutorielSQL</span></span></div>
        <div class="row"><svg class="chev"><use href="#chr"/></svg><span class="item"><svg class="ic" viewBox="0 0 16 16"><use href="#fbw" width="16" height="16"/><text x="10" y="5.500" class="ovl">C</text></svg><span>TutorielSQL_defaultNode_Organization</span></span></div>
      </div>
    </section>

    <section class="panel p-overview">
      <div class="tabbar">
        <div class="tab on tab-ov"><svg class="ic"><use href="#cil"/></svg><span>Overview</span><svg class="close"><use href="#x"/></svg></div>
        <div class="tab tab-plain"><svg class="ic"><use href="#mex"/></svg><span>Model Explorer</span></div>
        <div class="tools">
          <svg class="ic"><use href="#sync"/></svg><svg class="ic"><use href="#dots"/></svg><svg class="ic"><use href="#min"/></svg><svg class="ic"><use href="#max"/></svg>
        </div>
      </div>
      <div class="ov-body">
        <div class="cil-bar">CIL4Sys Process</div>
        <div class="subtabs"><span class="st on">Service</span><span class="st st-f">Function</span><span class="st st-c">Component</span><span class="st st-s">Simulation</span></div>
        <div class="st-content">
          <div class="tree tree-ov">
            <div class="row"><svg class="chev"><use href="#chd"/></svg><span class="item"><svg class="ic"><use href="#cil"/></svg><span>TutorielSQL</span></span></div>
            <div class="row l1"><svg class="chev"><use href="#chd"/></svg><span class="item"><svg class="ic"><use href="#fold"/></svg><span>Organization</span></span></div>
            <div class="row l2"><svg class="chev"><use href="#chd"/></svg><span class="item"><svg class="ic"><use href="#block"/></svg><span>Organization</span></span></div>
            <div class="row l3"><span class="chev"></span><span class="item sel"><svg class="ic"><use href="#ostr"/></svg><span>Organization Structure</span></span></div>
            <div class="row l2"><svg class="chev"><use href="#chd"/></svg><span class="item"><svg class="ic"><use href="#fold"/></svg><span>User Interface</span></span></div>
            <div class="row l3"><span class="chev"></span><span class="item"><svg class="ic"><use href="#phas"/></svg><span>Relevant Phases Diagram</span></span></div>
            <div class="row l3"><span class="chev"></span><span class="item"><svg class="ic"><use href="#stm"/></svg><span>User Interface StateMachine</span></span></div>
            <div class="row l3"><svg class="chev"><use href="#chr"/></svg><span class="item"><svg class="ic"><use href="#block"/></svg><span>User InterfaceBB</span></span></div>
            <div class="row l3"><svg class="chev"><use href="#chr"/></svg><span class="item"><svg class="ic"><use href="#fold"/></svg><span>Standard Use</span></span></div>
            <div class="row l3"><svg class="chev"><use href="#chr"/></svg><span class="item"><svg class="ic"><use href="#fold"/></svg><span>Interfaces</span></span></div>
            <div class="row l2"><svg class="chev"><use href="#chr"/></svg><span class="item"><svg class="ic"><use href="#fold"/></svg><span>Person Management</span></span></div>
          </div>
        </div>
      </div>
    </section>

    <section class="panel p-assist">
      <div class="tabbar">
        <div class="tab on tab-as"><svg class="ic"><use href="#cil"/></svg><span>Assistant</span><svg class="close"><use href="#x"/></svg></div>
        <div class="tab tab-plain"><svg class="ic"><use href="#out"/></svg><span>Outline</span></div>
        <div class="tools tools-as">
          <span class="hl-mini"><svg class="ic"><use href="#link"/></svg></span><span class="cleartxt">Clear</span><svg class="ic"><use href="#dots"/></svg><svg class="ic"><use href="#min"/></svg><svg class="ic"><use href="#max"/></svg>
        </div>
      </div>
      <div class="blank"></div>
    </section>
  </aside>

  <section class="rightcol">
    <div class="editors">
      <div class="tabbar ed-tabs">
        <div class="tab on tab-di"><svg class="ic"><use href="#pap"/></svg><span>TutorielSQL.di</span><svg class="close"><use href="#x"/></svg></div>
      </div>
      <div class="ed-main">
        <div class="ed-left">
          <div class="ed-view">
            <svg class="canvas canvas-l" viewBox="530 137 660 518" xmlns="http://www.w3.org/2000/svg">
              <rect x="530" y="137" width="660" height="518" fill="#fff"/>
              <rect x="530" y="137" width="660" height="518" fill="url(#grid)"/>
              <rect x="558" y="167" width="700" height="240" fill="#fff" stroke="#9ec0de"/>
              <rect x="558" y="167" width="700" height="15" fill="#f5f8ff" stroke="#9ec0de"/>
              <path d="M558 407h640" stroke="#7f95ad" stroke-width="2"/>
              <use href="#block" x="847" y="169" width="11" height="13"/>
              <text x="860" y="179" class="dt">Organization</text>
              <path d="M645 287H591q-3 0-3-3V200q0-3 3-3h488q3 0 3 3v73h-30" class="wire"/>
              <path d="M565 317h80" class="wire thin"/>
              <path d="M777 287h113" class="wire"/>
              <path d="M780 332h420" class="wire"/>
              <rect x="650" y="275" width="127" height="58" fill="#cfe4ef"/>
              <rect x="648" y="273" width="127" height="58" fill="#f6f8ff" stroke="#a5dcf5" stroke-width="1.200"/>
              <rect x="890" y="244" width="158" height="62" fill="#cfe4ef"/>
              <rect x="888" y="242" width="158" height="62" fill="#f6f8ff" stroke="#a5dcf5" stroke-width="1.200"/>
              <text x="572" y="321" class="dt">inputCustomer</text>
              <use href="#port" x="549" y="309" width="20" height="20"/>
              <use href="#port" x="639" y="309" width="20" height="20"/>
              <use href="#port" x="639" y="279" width="20" height="20"/>
              <g fill="#000"><rect x="638" y="279" width="4" height="4"/><rect x="645" y="279" width="4" height="4"/><rect x="652" y="279" width="4" height="4"/><rect x="638" y="286" width="4" height="4"/><rect x="652" y="286" width="4" height="4"/><rect x="638" y="293" width="4" height="4"/><rect x="645" y="293" width="4" height="4"/><rect x="652" y="293" width="4" height="4"/></g>
              <use href="#port" x="767" y="284" width="20" height="20"/>
              <use href="#port" x="767" y="320" width="20" height="20"/>
              <use href="#port" x="879" y="279" width="20" height="20"/>
              <use href="#port" x="1037" y="263" width="20" height="20"/>
              <text x="657" y="297" class="dt">om_other_services</text>
              <use href="#block" x="672" y="296" width="12" height="10"/>
              <text x="689" y="305" class="dt">User Interface</text>
              <text x="663" y="321" class="dt">listening</text>
              <text x="790" y="297" class="dt">broadcast_to_other_ser</text>
              <text x="790" y="332" class="dt">broadcast</text>
              <text x="903" y="291" class="dt">from_other_services</text>
              <use href="#block" x="911" y="267" width="12" height="10"/>
              <text x="930" y="276" class="dt">Person Management</text>
              <text x="1061" y="275" class="dt">broadcast_to_other_services</text>
            </svg>
            <div class="vscroll vs-l"><svg class="arr"><use href="#chu"/></svg><span class="grow"></span><svg class="arr"><use href="#chg"/></svg></div>
          </div>
          <div class="hscroll hs-l"><svg class="arr"><use href="#chr"/></svg><span class="thumb th-l"></span><svg class="arr"><use href="#chr"/></svg></div>
          <div class="pgtabs">
            <span class="pgt pg-w"><svg class="ic"><use href="#wel"/></svg>Welcome</span>
            <span class="pgt on pg-os"><svg class="ic"><use href="#ostr"/></svg>Organization Structure<svg class="close"><use href="#x"/></svg></span>
          </div>
        </div>
        <div class="sash"><span class="sash-btn"><svg viewBox="0 0 10 16"><path d="M8 2L2 8l6 6z" fill="#fff" stroke="#888"/></svg></span></div>
        <div class="ed-right">
          <div class="ed-view">
            <svg class="canvas canvas-r" viewBox="1225 137 662 518" xmlns="http://www.w3.org/2000/svg">
              <rect x="1225" y="137" width="662" height="518" fill="#fff"/>
              <path d="M1225 137h662" stroke="#3f88c0" stroke-width="2"/>
              <path d="M1225.500 137V655" stroke="#9ec0de"/>
              <path d="M1226 157h183l6-6v-14" fill="#f8faff" stroke="#9ec0de"/>
              <text x="1231" y="154" class="sq">Process the spouse request</text>
              <path d="M1305 211V655" stroke="#1a1a9c" stroke-width="1.500" stroke-dasharray="7 5"/>
              <path d="M1695 211V655" stroke="#c8101c" stroke-dasharray="7 5"/>
              <rect x="1255.500" y="173.500" width="99" height="37" fill="#fff" stroke="#1a1a9c" stroke-width="1.200"/>
              <rect x="1645.500" y="173.500" width="99" height="37" fill="#fff" stroke="#c8101c" stroke-width="1.200"/>
              <text x="1305" y="190" class="lbl blue">: User</text>
              <text x="1305" y="207" class="lbl blue">InterfaceBB</text>
              <text x="1695" y="190" class="lbl red">: Person</text>
              <text x="1695" y="207" class="lbl red">ManagementBB</text>
              <ellipse cx="1695" cy="292" rx="19.500" ry="24.500" fill="#f8faff" stroke="#2f2f80"/>
              <text x="1695" y="288" class="sq mid">ON</text>
              <text x="1695" y="306" class="sq mid">{}</text>
              <rect x="1353" y="335" width="297" height="18" fill="#0078d7" stroke="#111" stroke-dasharray="1 1"/>
              <text x="1361" y="349" class="sq wht">informations to request the spouse identity(value)</text>
              <path d="M1305 358h390M1679 351l16 7-16 7" class="msg"/>
              <path d="M1695 407h62v60h-62M1711 460l-16 7 16 7" class="msg"/>
              <text x="1769" y="443" class="sq">check the spouse inf</text>
              <path d="M1695 498h-390M1321 491l-16 7 16 7" class="msg"/>
              <text x="1303" y="516" class="sq">spouse information to the user interface(value = spouse_information)</text>
            </svg>
            <div class="vscroll vs-r"><span class="thumb th-v"></span><span class="grow"></span><svg class="arr"><use href="#chd"/></svg></div>
          </div>
          <div class="hscroll hs-r"><svg class="arr"><use href="#chr"/></svg><span class="thumb th-r"></span><svg class="arr"><use href="#chr"/></svg></div>
          <div class="pgtabs pgtabs-r">
            <span class="pgt on pg-ps"><svg class="ic"><use href="#seq"/></svg>Process the spouse request<svg class="close"><use href="#x"/></svg></span>
          </div>
        </div>
      </div>
    </div>

    <div class="consolepanel">
      <div class="con-tabs">
        <span class="ct ct-a"><svg class="ic"><use href="#tb-props"/></svg>Properties</span>
        <span class="ct ct-p"><svg class="ic"><use href="#tb-prob"/></svg>Problems</span>
        <span class="ct on"><svg class="ic"><use href="#tb-cons"/></svg>Console<svg class="close"><use href="#x"/></svg></span>
        <span class="grow"></span>
        <span class="ct-tools">
          <span class="i"><svg><use href="#clear"/></svg></span>
          <span class="s s1"></span>
          <span class="i"><svg><use href="#dn"/></svg></span>
          <span class="i"><svg><use href="#up"/></svg></span>
          <span class="i act"><svg><use href="#link"/></svg></span>
          <span class="s s1"></span>
          <span class="i"><svg><use href="#csave"/></svg></span>
          <span class="i"><svg><use href="#clock"/></svg></span>
          <span class="i"><svg><use href="#word"/></svg></span>
          <span class="i"><svg><use href="#cdel"/></svg></span>
          <span class="i act"><svg><use href="#cshow"/></svg></span>
          <span class="s s1"></span>
          <span class="i act"><svg><use href="#cpin"/></svg></span>
          <span class="i"><svg><use href="#tb-cons"/></svg></span><span class="a a-sm"></span>
          <span class="i"><svg><use href="#wnew"/></svg></span><span class="a a-sm"></span>
          <span class="i"><svg><use href="#min"/></svg></span>
          <span class="i"><svg><use href="#max"/></svg></span>
        </span>
      </div>
      <div class="con-title">CDT Build Console [TutorielSQL]</div>
      <div class="con-body">
        <span class="caret"></span>
        <div class="vscroll vs-c"><svg class="arr"><use href="#chu"/></svg><span class="grow"></span><svg class="arr"><use href="#chg"/></svg></div>
      </div>
      <div class="hscroll hs-c"><svg class="arr"><use href="#chr"/></svg><span class="grow"></span><svg class="arr"><use href="#chr"/></svg></div>
    </div>
  </section>
</main>

<div class="statusbar"><span class="stat-grip"></span></div>

<footer class="taskbar">
  <span class="tk-start"><svg><use href="#t-win"/></svg></span>
  <span class="tk on"><svg><use href="#t-files"/></svg></span>
  <span class="tk on"><svg><use href="#t-key"/></svg></span>
  <span class="tk"><svg><use href="#t-ecl"/></svg></span>
  <span class="tk"><svg><use href="#t-gem"/></svg></span>
  <span class="tk"><svg><use href="#t-edge"/></svg></span>
  <span class="tk"><svg viewBox="0 0 24 24"><use href="#t-out" width="24" height="24"/><text x="7.500" y="16.500" class="tso">O</text></svg></span>
  <span class="tk"><svg><use href="#t-play"/></svg></span>
  <span class="tk"><svg viewBox="0 0 24 24"><use href="#t-ppt" width="24" height="24"/><text x="7" y="16" class="tso">P</text></svg></span>
  <span class="tk on"><svg><use href="#t-chr"/></svg></span>
  <span class="tk on cur"><svg viewBox="0 0 24 24"><use href="#t-des" width="24" height="24"/><text x="12.500" y="16" class="tso">D</text></svg></span>
  <span class="tk on"><svg viewBox="0 0 24 24"><use href="#t-teams" width="24" height="24"/><text x="7" y="16.500" class="tso">T</text></svg></span>
  <span class="tk on"><svg><use href="#t-vs"/></svg></span>
  <span class="tk on"><svg><use href="#t-pal"/></svg></span>
  <span class="tk on"><svg><use href="#t-snip"/></svg></span>
  <span class="grow"></span>
  <div class="tray">
    <svg class="tr-cloud"><use href="#t-cloud"/></svg>
    <span class="temp">1°C</span><span class="sky">Nuageux</span>
    <svg class="tr-up" viewBox="0 0 14 8"><path d="M1 7l6-6 6 6" fill="none" stroke="#222" stroke-width="1.200"/></svg>
    <svg class="tr-i"><use href="#t-meet"/></svg>
    <svg class="tr-i tr-d"><use href="#t-drive"/></svg>
    <div class="clock"><span>16:25</span><span>25/01/2022</span></div>
    <span class="note"><svg><use href="#t-note"/></svg><span class="badge">2</span></span>
  </div>
</footer>
</div>

<div class="popup">
  <div class="pi">Customize...</div>
  <div class="pi">Save As...</div>
  <div class="pi">Reset</div>
  <div class="pi">Close</div>
  <div class="psep"></div>
  <div class="pi">Show Text</div>
</div>
</body>
</html>
```
FILE: styles.css
```css
* { box-sizing: border-box; }
html, body { margin: 0; padding: 0; width: 1920px; height: 1080px; overflow: hidden; }
body { font-family: "Noto Sans", "Open Sans", sans-serif; font-size: 12.5px; color: #1e1e1e; background: #f0f0f0; letter-spacing: -0.12px; }
svg { display: block; }
.sprite { width: 0; height: 0; position: absolute; }
.ovl { font: bold 7px "Noto Sans", sans-serif; fill: #2a4f8f; letter-spacing: 0; }
.ovlc { font: bold 9px "Noto Sans", sans-serif; fill: #3d6db0; text-anchor: middle; letter-spacing: 0; }
.ovw { font: bold 8px "Noto Sans", sans-serif; fill: #fff; text-anchor: middle; letter-spacing: 0; }
.bin { font: 6px "Noto Sans", sans-serif; fill: #333; text-anchor: middle; letter-spacing: 0; }
.tso { font: bold 11px "Noto Sans", sans-serif; fill: #fff; text-anchor: middle; letter-spacing: 0; }

.app { width: 1920px; height: 1080px; display: flex; flex-direction: column; }
.grow { flex: 1 1 auto; }

.titlebar { height: 30px; background: #fff; display: flex; align-items: center; padding-left: 5px; padding-bottom: 6px; }
.ic-title { width: 16px; height: 16px; }
.title { margin-left: 2px; letter-spacing: 0.04px; }
.winctl { margin-left: auto; display: flex; padding-right: 3px; }
.wc { width: 49px; height: 20px; display: flex; align-items: center; justify-content: center; }
.wc svg { width: 11px; height: 11px; }

.menubar { height: 15px; background: #fff; display: flex; gap: 14px; padding-left: 7px; line-height: 13px; }

.toolbars { height: 64px; background: #f0f0f0; display: flex; flex-direction: column; border-bottom: 1px solid #dcdcdc; }
.tbrow { height: 34px; display: flex; align-items: center; padding: 4px 0 0 5px; }
.row2 { height: 29px; padding: 2px 5px 0 1px; }
.i { width: 22px; height: 22px; flex: none; display: flex; align-items: center; justify-content: center; }
.i svg { width: 18px; height: 18px; }
.i.dim { opacity: .55; }
.a { width: 18px; flex: none; display: flex; justify-content: center; }
.a::after { content: ""; border-left: 3.5px solid transparent; border-right: 3.5px solid transparent; border-top: 4px solid #222; }
.a.dim::after { border-top-color: #8a8a8a; }
.a-sm { width: 16px; }
.g { width: 8px; height: 22px; flex: none; background: radial-gradient(circle at center, #a8a08a 1px, transparent 1.2px) center top/2px 4px repeat-y; }
.g4 { width: 4px; }
.g6 { width: 6px; }
.g7 { width: 7px; }
.g8 { width: 8px; }
.g11 { margin-left: 11px; }
.g14 { width: 4px; margin: 0 7px 0 10px; }
.s { width: 8px; height: 24px; flex: none; background: linear-gradient(#b5b5b5,#b5b5b5) center/1px 100% no-repeat; }
.s6 { width: 6px; }
.s12 { width: 12px; }
.s1 { width: 7px; height: 18px; }
.sp2 { width: 2px; flex: none; }
.sp4 { width: 4px; flex: none; }
.sp6 { width: 6px; flex: none; }
.sp9 { width: 9px; flex: none; }
.bigbtn { width: 32px; height: 25px; margin-right: 7px; flex: none; border: 1px solid #a9a9a9; background: #e9e9e9; display: flex; align-items: center; justify-content: center; border-radius: 1px; }
.bigbtn svg { width: 18px; height: 18px; }
.bigbtn:nth-child(3) { margin-right: 10px; }
.combo { height: 26px; flex: none; background: #fff; border: 1px solid #c4c4c4; display: flex; align-items: center; padding-left: 5px; gap: 4px; border-radius: 1px; font-size: 12.6px; }
.combo-run { width: 149px; margin-right: 6px; }
.combo-cfg { width: 248px; }
.combo .cchev { margin-left: auto; }
.combo-cfg .cchev { margin-right: 2px; }
.ic18 { width: 16px; height: 16px; flex: none; }
.cchev { width: 14px; height: 14px; flex: none; margin-right: 2px; opacity: .75; }
.cchev.dim { opacity: .4; }
.zoombox { width: 116px; height: 22px; margin-left: -2px; flex: none; background: #fff; display: flex; align-items: center; padding: 2px; }
.zoomval { flex: 1; height: 18px; line-height: 18px; background: #e9e9e9; color: #8a8a8a; padding-left: 3px; }
.tbt { color: #a5a5a5; font-size: 15px; font-family: "Liberation Serif", serif; }
.bold { font-weight: bold; }
.ital { font-style: italic; }
.hl-btn { width: 21px; height: 20px; margin-left: 3px; flex: none; background: #b8d8f2; border: 1px solid #9ccaea; display: flex; align-items: center; justify-content: center; }
.hl-btn svg { width: 16px; height: 16px; }

.workbench { height: 901px; display: flex; background: #f0f0f0; }
.leftcol { width: 528px; flex: none; display: flex; flex-direction: column; padding-right: 5px; }
.rightcol { flex: 1; min-width: 0; display: flex; flex-direction: column; }

.panel { border-right: 1px solid #d0d0d0; display: flex; flex-direction: column; }
.p-explorer { height: 319px; margin-bottom: 5px; border-left: 1px solid #d8d8d8; border-bottom: 1px solid #d0d0d0; }
.p-overview { height: 457px; margin-bottom: 6px; }
.p-assist { height: 114px; }

.tabbar { height: 28px; flex: none; display: flex; background: #e4e4e4; border-bottom: 1px solid #d8d8d8; border-top: 1px solid #dcdcdc; }
.tab { height: 27px; display: flex; align-items: center; font-size: 12.5px; white-space: nowrap; }
.tab.on { background: #f0f0f0; }
.tab .ic { margin-right: 4px; }
.tab .close { margin-left: auto; margin-right: 7px; }
.tab-pe { width: 143px; padding-left: 5px; }
.tab-ov { width: 104px; padding-left: 4px; }
.tab-as { width: 103px; padding-left: 4px; }
.tab-as .close { margin-right: 8px; }
.tab-plain { margin-left: -1px; border-left: 1px solid #d0d0d0; padding-left: 3px; }
.tab-di { width: 129px; padding-left: 4px; border-right: 1px solid #d4d4d4; }
.ic { width: 16px; height: 16px; flex: none; }
.close { width: 12px; height: 12px; flex: none; }
.tools { margin-left: auto; display: flex; align-items: center; gap: 7px; padding-right: 7px; }
.tools .ic { width: 16px; height: 16px; }
.tools-as { gap: 0; }
.tools-as .ic + .ic { margin-left: 7px; }
.hl-mini { width: 24px; height: 21px; background: #b8d8f2; border: 1px solid #9ccaea; display: flex; align-items: center; justify-content: center; }
.cleartxt { margin: 0 12px 0 3px; font-size: 12.5px; }

.tree { background: #fff; font-size: 12.5px; }
.tree-pe { flex: 1; padding-top: 1px; }
.row { height: 20px; display: flex; align-items: center; padding-left: 3px; line-height: 20px; white-space: nowrap; }
.row.l1 { padding-left: 21px; }
.row.l2 { padding-left: 39px; }
.row.l3 { padding-left: 57px; }
.chev { width: 18px; height: 14px; flex: none; display: block; margin-left: -2px; margin-right: 2px; }
.item { display: flex; align-items: center; height: 20px; gap: 4px; padding-left: 1px; padding-right: 3px; }
.sel { background: #d4d4d4; }
.deco { color: #957f55; }

.ov-body { flex: 1; background: #f0f0f0; padding: 5px 5px 0 6px; display: flex; flex-direction: column; }
.cil-bar { height: 17px; background: #b9b9b9; text-align: center; line-height: 19px; font-size: 12.5px; }
.subtabs { height: 24px; margin-top: 5px; display: flex; align-items: flex-end; }
.st { height: 22px; display: flex; align-items: center; justify-content: center; width: 58px; background: #f0f0f0; border: 1px solid #dadada; border-bottom: none; border-left: none; font-size: 12.5px; padding-top: 2px; }
.st.on { height: 24px; width: 57px; background: #fcfcfc; border: 1px solid #dadada; border-bottom: none; padding: 0 0 3px; }
.st-f { padding-left: 1px; }
.st-c { width: 80px; padding-left: 3px; }
.st-s { width: 70px; padding-left: 3px; }
.st-content { width: 336px; height: 369px; background: #fcfcfc; border: 1px solid #dadada; padding: 6px 5px 3px 8px; }
.tree-ov { height: 358px; border: 1.5px solid #6f6f6f; padding: 1px 0 0 1px; }
.tree-ov .row { margin-left: -2px; }
.tree-ov .item { gap: 5px; }

.blank { flex: 1; background: #fff; }

.editors { height: 587px; display: flex; flex-direction: column; }
.ed-tabs { border-left: 1px solid #d8d8d8; }
.ed-main { flex: 1; display: flex; min-height: 0; }
.ed-left { width: 680px; flex: none; display: flex; flex-direction: column; padding-left: 2px; }
.ed-right { flex: 1; display: flex; flex-direction: column; min-width: 0; }
.ed-view { height: 518px; display: flex; }
.canvas { height: 518px; flex: none; }
.canvas-l { width: 660px; }
.canvas-r { width: 662px; }
.wire { fill: none; stroke: #9dbdd9; stroke-width: 2; }
.wire.thin { stroke-width: 1.500; }
.dt { font: 9.1px "Noto Sans", sans-serif; fill: #2d2a6e; letter-spacing: -0.3px; }
.sq { font: 12.35px "Noto Sans", sans-serif; fill: #25226a; letter-spacing: 0; }
.sq.mid { text-anchor: middle; }
.sq.wht { fill: #fff; }
.lbl { font: bold 12.5px "Noto Sans", sans-serif; text-anchor: middle; letter-spacing: -0.2px; }
.blue { fill: #14148c; }
.red { fill: #c00010; }
.msg { fill: none; stroke: #5b8fbf; stroke-width: 1.200; }
.vscroll { flex: 1; display: flex; flex-direction: column; align-items: center; background: #f0f0f0; }
.vs-l { border-right: 1px solid #c8c8c8; }
.vs-r { flex: none; width: 20px; border-right: 1px solid #c8c8c8; align-items: flex-start; padding-left: 0; }
.vs-r .arr { margin-left: 3px; }
.arr { width: 11px; height: 11px; margin: 4px 0; flex: none; }
.hscroll { height: 17px; flex: none; display: flex; align-items: center; background: #f0f0f0; }
.hscroll .arr { margin: 0 3px; }
.hscroll .arr:first-child { transform: rotate(180deg); }
.hs-l { padding-right: 21px; border-right: 1px solid #c8c8c8; }
.hs-r { padding-right: 26px; margin-right: 13px; border-left: 1px solid #c8c8c8; border-right: 1px solid #c8c8c8; }
.thumb { height: 17px; background: #cbcbcb; flex: none; }
.th-l { width: 541px; margin-right: auto; }
.th-r { width: 482px; margin-right: auto; margin-left: 2px; }
.th-v { width: 18px; height: 254px; margin-top: 13px; }
.pgtabs { height: 24px; flex: none; display: flex; align-items: flex-start; background: #e4e4e4; border-top: 1px solid #aaa; font-size: 12.7px; padding-left: 0; border-bottom: 1px solid #d4d4d4; }
.pgt { height: 22px; display: flex; align-items: center; gap: 3px; padding: 0 1px 0 1px; white-space: nowrap; }
.pg-w { width: 80px; }
.pgt.on { background: #f0f0f0; border: 1px solid #b5b5b5; border-top: none; border-radius: 0 0 3px 3px; }
.pg-os { width: 180px; padding-left: 3px; gap: 4px; }
.pg-ps { width: 212px; padding-left: 4px; background: #efefef; }
.pgt .close { margin-left: auto; margin-right: 6px; }

.sash { width: 17px; flex: none; background: #eaeaea; border-right: 1px solid #c0c0c0; }
.sash-btn { display: block; height: 24px; background: #f4f4f4; padding: 5px 3px; border-bottom: 1px solid #bbb; }
.sash-btn svg { width: 8px; height: 14px; }

.consolepanel { height: 309px; margin-top: 5px; display: flex; flex-direction: column; background: #fff; border-top: 1px solid #e0e0e0; }
.con-tabs { height: 25px; flex: none; display: flex; align-items: center; background: #f0f0f0; font-size: 12.5px; padding-left: 3px; }
.ct { height: 25px; display: flex; align-items: center; gap: 6px; }
.ct .ic { width: 15px; height: 15px; }
.ct-a { width: 89.5px; }
.ct-p { width: 80.500px; }
.ct.on { width: 96px; background: #f8f8f8; padding-left: 3.500px; gap: 4px; border: 1px solid #e0e0e0; border-bottom: none; }
.ct.on .close { margin-left: auto; margin-right: 7px; }
.ct-tools { display: flex; align-items: center; padding-right: 4px; }
.ct-tools .i { width: 23.500px; height: 21px; }
.ct-tools .i svg { width: 16px; height: 16px; }
.ct-tools .act { background: #b8d8f2; box-shadow: inset 0 0 0 1px #9ccaea; }
.con-title { height: 19px; flex: none; line-height: 19px; padding-left: 1px; border-bottom: 1px solid #a8a8a8; background: #fff; font-size: 12.5px; border-top: 1px solid #e4e4e4; }
.con-body { flex: 1; min-height: 0; display: flex; background: #fff; }
.caret { width: 1px; height: 17px; background: #111; margin: 3px 0 0 2px; }
.vs-c { flex: none; width: 17px; margin-left: auto; margin-right: 3px; background: #fdfdfd; }
.hs-c { height: 20px; background: #fff; padding: 0 18px 0 0; justify-content: space-between; }

.statusbar { height: 27px; flex: none; background: #f0f0f0; display: flex; padding-left: 1600px; padding-top: 6px; }
.stat-grip { width: 2px; height: 14px; background: radial-gradient(circle, #9a9078 1px, transparent 1.1px) 0 0/2px 5px repeat-y; }

.taskbar { height: 43px; flex: none; display: flex; align-items: center; background: linear-gradient(90deg, #d2d7e0, #d6d6d6); font-size: 13.5px; }
.tk-start { width: 56px; height: 43px; flex: none; display: flex; align-items: center; justify-content: center; padding-right: 4px; }
.tk-start svg { width: 20px; height: 20px; }
.tk { width: 54px; height: 43px; flex: none; display: flex; align-items: center; justify-content: center; padding-bottom: 2px; }
.tk svg { width: 26px; height: 26px; }
.tk.on { background: linear-gradient(#0078d7,#0078d7) center bottom/45px 3px no-repeat; }
.tk.cur { background: linear-gradient(#0078d7,#0078d7) center bottom/53px 3px no-repeat, #eef0f4; }
.tray { display: flex; align-items: center; height: 43px; padding-right: 22px; }
.tr-cloud { width: 25px; height: 22px; }
.temp { margin-left: 13px; }
.sky { margin-left: 11px; }
.tr-up { width: 12px; height: 7px; margin-left: 17px; }
.tr-i { width: 16px; height: 16px; margin-left: 9px; }
.tr-d { width: 17px; height: 17px; margin-left: 7px; }
.clock { width: 90px; margin-left: 12px; display: flex; flex-direction: column; align-items: center; gap: 3px; font-size: 13.5px; line-height: 17px; }
.note { margin-left: 10px; width: 24px; height: 26px; position: relative; display: block; }
.note svg { width: 20px; height: 20px; }
.badge { position: absolute; left: 7px; top: 9px; width: 17px; height: 17px; border-radius: 50%; border: 1px solid #555; background: #d6d6d6; font-size: 11px; font-weight: bold; text-align: center; line-height: 15px; }

.popup { position: absolute; left: 1762px; top: 107px; width: 158px; height: 121px; background: #f0f0f0; border: 1px solid #c4c4c4; box-shadow: 2px 3px 5px rgba(0,0,0,.3); padding: 2px 0 0 0; }
.pi { height: 22px; line-height: 22px; padding-left: 33px; }
.psep { height: 1px; margin: 2px 2px 5px 30px; background: #d5d5d5; }
```
